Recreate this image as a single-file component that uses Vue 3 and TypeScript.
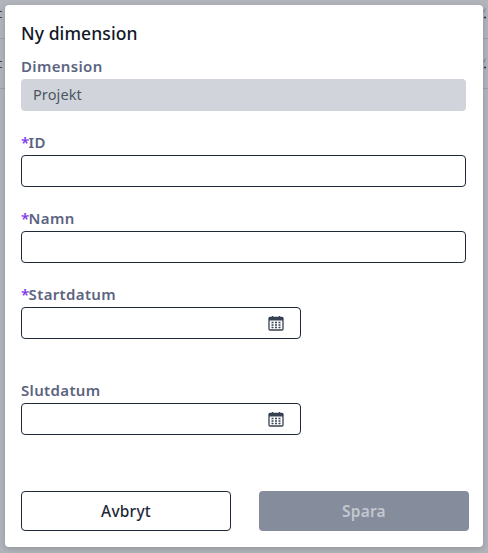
<script setup lang="ts">
interface Field { label: string; required: boolean; value?: string; type: 'readonly' | 'text' | 'date' }
const fields: Field[] = [
  { label: 'Dimension', required: false, value: 'Projekt', type: 'readonly' },
  { label: 'ID', required: true, type: 'text' },
  { label: 'Namn', required: true, type: 'text' },
  { label: 'Startdatum', required: true, type: 'date' },
  { label: 'Slutdatum', required: false, type: 'date' },
]
</script>

<template>
  <div class="page">
    <div class="backdrop">
      <div class="line line-a"></div>
      <div class="line line-b"></div>
      <svg class="marks" width="488" height="100" viewBox="0 0 488 100" fill="none">
        <path d="M0 11.5h2M0 17.5h2M0 61.5h2M0 67.5h2" stroke="#3d4149" stroke-width="1" />
        <path d="M486 8.5q-2 1 -2 4M486 58.5q-2 1 -2 4" stroke="#7d8188" stroke-width="1" />
        <path d="M484 17.5h2M484 67.5h2" stroke="#2f3339" stroke-width="1.4" />
      </svg>
    </div>
    <div class="modal">
      <h1 class="title">Ny dimension</h1>
      <div class="fields">
        <div v-for="f in fields" :key="f.label" class="field" :class="'field-' + f.type">
          <div class="label"><span v-if="f.required" class="star">*</span>{{ f.label }}</div>
          <div v-if="f.type === 'readonly'" class="readonly">{{ f.value }}</div>
          <div v-else-if="f.type === 'text'" class="input"></div>
          <div v-else class="input date">
            <svg class="cal" width="16" height="16" viewBox="0 0 16 16" fill="none">
              <rect x="1" y="2.5" width="14" height="12.5" rx="1" stroke="#374151" stroke-width="1.3" />
              <rect x="1" y="2.5" width="14" height="3" fill="#374151" />
              <path d="M4.5 1v3M11.5 1v3" stroke="#374151" stroke-width="1.3" />
              <path d="M3.5 7.5h2M7 7.5h2M10.5 7.5h2M3.5 10h2M7 10h2M10.5 10h2M3.5 12.5h2M7 12.5h2M10.5 12.5h2" stroke="#374151" stroke-width="1.3" />
            </svg>
          </div>
        </div>
      </div>
      <div class="actions">
        <button class="btn cancel" type="button">Avbryt</button>
        <button class="btn save" type="button" disabled>Spara</button>
      </div>
    </div>
  </div>
</template>

<style>
html, body { margin: 0; padding: 0; }
</style>

<style scoped>
.page {
  position: relative;
  width: 488px;
  height: 553px;
  overflow: hidden;
  font-family: "Noto Sans", "Inter", sans-serif;
}
.backdrop {
  position: absolute;
  inset: 0;
  background: #b1b5bb;
}
.marks {
  position: absolute;
  left: 0;
  top: 0;
}
.line {
  position: absolute;
  left: 0;
  right: 0;
  height: 1px;
  background: #9da1a8;
}
.line-a { top: 38px; }
.line-b { top: 88px; }
.modal {
  position: absolute;
  left: 5px;
  top: 5px;
  width: 478px;
  height: 542px;
  box-sizing: border-box;
  background: #fff;
  border-radius: 4px;
  padding: 17px 14px 16px 16px;
  display: flex;
  flex-direction: column;
  box-shadow: 0 2px 6px rgba(0, 0, 0, 0.18);
}
.title {
  margin: 0;
  font-size: 17.5px;
  line-height: 22px;
  font-weight: 500;
  letter-spacing: 0.1px;
  color: #111827;
}
.fields {
  display: flex;
  flex-direction: column;
  margin-top: 12px;
}
.field { margin-bottom: 21px; }
.field-date { margin-bottom: 41px; }
.field-date:last-child { margin-bottom: 0; }
.label {
  font-size: 15px;
  line-height: 20px;
  font-weight: 600;
  letter-spacing: 0.35px;
  color: #5c6480;
  height: 20px;
  margin-bottom: 3px;
}
.star { color: #7c3aed; letter-spacing: -0.6px; }
.readonly {
  width: 445px;
  height: 32px;
  box-sizing: border-box;
  background: #d1d5db;
  border-radius: 4px;
  padding: 0 12px;
  font-size: 14.5px;
  line-height: 30px;
  letter-spacing: 0.1px;
  color: #4b5563;
}
.input {
  width: 445px;
  height: 32px;
  box-sizing: border-box;
  border: 1px solid #1f2937;
  border-radius: 4px;
  background: #fff;
}
.date {
  width: 280px;
  display: flex;
  align-items: center;
  justify-content: flex-end;
  padding-right: 16px;
}
.cal { display: block; }
.actions {
  margin-top: auto;
  display: flex;
  justify-content: space-between;
}
.btn {
  width: 210px;
  height: 40px;
  box-sizing: border-box;
  border-radius: 4px;
  font-family: inherit;
  font-size: 15.5px;
  letter-spacing: 0.2px;
  padding: 0;
}
.cancel {
  background: #fff;
  border: 1px solid #1f2937;
  color: #1f2937;
  font-weight: 500;
}
.save {
  background: #858c9b;
  border: 0;
  color: #c3c7cf;
  font-weight: 600;
}
</style>
